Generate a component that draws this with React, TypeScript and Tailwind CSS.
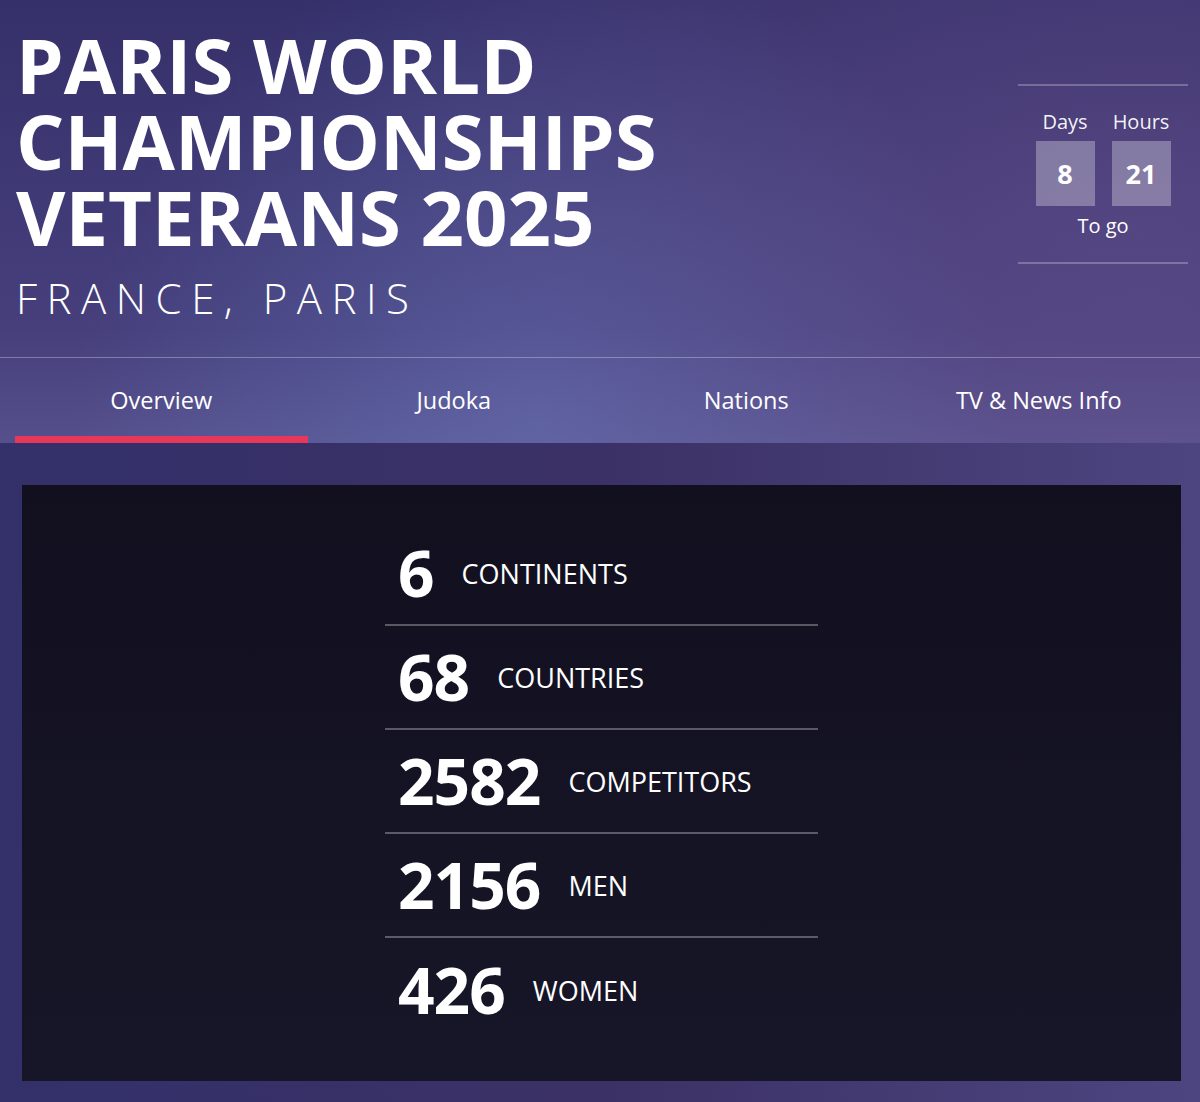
import React from 'react';

const stats = [
  { value: '6', label: 'CONTINENTS' },
  { value: '68', label: 'COUNTRIES' },
  { value: '2582', label: 'COMPETITORS' },
  { value: '2156', label: 'MEN' },
  { value: '426', label: 'WOMEN' },
];

const tabs = ['Overview', 'Judoka', 'Nations', 'TV & News Info'];

export default function App() {
  return (
    <div
      className="relative w-[1200px] h-[1102px] overflow-hidden text-white bg-[#463f78]"
      style={{ fontFamily: '"Open Sans", "Noto Sans", sans-serif' }}
    >
      {/* background glow */}
      <div className="absolute inset-0 bg-[linear-gradient(180deg,#35306a_0%,#463f7c_30%,#55508c_40%,#3d3670_48%,#4b4580_100%)]" />
      <div className="absolute inset-0 bg-[radial-gradient(ellipse_at_45%_38%,rgba(110,130,200,0.4),transparent_50%)]" />
      <div className="absolute inset-0 bg-[radial-gradient(ellipse_at_95%_20%,rgba(120,90,150,0.35),transparent_50%)]" />
      <div className="absolute inset-0 bg-[radial-gradient(ellipse_at_0%_95%,rgba(130,100,160,0.4),transparent_40%)]" />

      <div className="relative">
        {/* header */}
        <header className="flex justify-between pl-[16px] pr-[12px] h-[358px] border-b border-white/30">
          <div className="pt-[27px]">
            <h1 className="text-[76px] leading-[76px] font-bold">
              <span className="block">PARIS WORLD</span>
              <span className="block">CHAMPIONSHIPS</span>
              <span className="block">VETERANS 2025</span>
            </h1>
            <p className="mt-[18px] text-[42px] leading-[50px] font-light tracking-[9.5px]">FRANCE, PARIS</p>
          </div>
          <div className="mt-[84px] w-[170px] h-[180px] border-y-2 border-white/25 flex flex-col items-center justify-center">
            <div className="flex gap-[17px]">
              {[
                ['Days', '8'],
                ['Hours', '21'],
              ].map(([k, v]) => (
                <div key={k} className="flex flex-col items-center">
                  <span className="text-[20px] leading-[28px] text-white/95">{k}</span>
                  <span className="mt-[5px] w-[59px] h-[65px] bg-white/30 flex items-center justify-center pt-[3px] text-[27px] font-bold">
                    {v}
                  </span>
                </div>
              ))}
            </div>
            <span className="mt-[5px] text-[20px] leading-[30px]">To go</span>
          </div>
        </header>

        {/* tabs */}
        <nav className="grid grid-cols-4 px-[15px] h-[85px]">
          {tabs.map((t, i) => (
            <div
              key={t}
              className={`flex items-center justify-center text-[23.5px] pt-[8px] border-b-[7px] ${
                i === 0 ? 'border-[#e8385a]' : 'border-transparent'
              }`}
            >
              {t}
            </div>
          ))}
        </nav>

        {/* content */}
        <div className="bg-[linear-gradient(90deg,#33306a,#3b3166_50%,#4d4580)] pl-[22px] pr-[19px] pt-[42px] pb-[21px]">
          <div className="h-[596px] bg-[linear-gradient(180deg,#12101f,#171628)] flex justify-center pt-[37px]">
            <div className="w-[433px]">
              {stats.map((s, i) => (
                <div
                  key={s.label}
                  className={`flex items-center gap-[28px] h-[104px] px-[13px] ${
                    i < stats.length - 1 ? 'border-b-2 border-white/30' : ''
                  }`}
                >
                  <span className="text-[64px] font-bold leading-none tracking-[-1px]">{s.value}</span>
                  <span className="text-[27px] leading-none">{s.label}</span>
                </div>
              ))}
            </div>
          </div>
        </div>
      </div>
    </div>
  );
}
